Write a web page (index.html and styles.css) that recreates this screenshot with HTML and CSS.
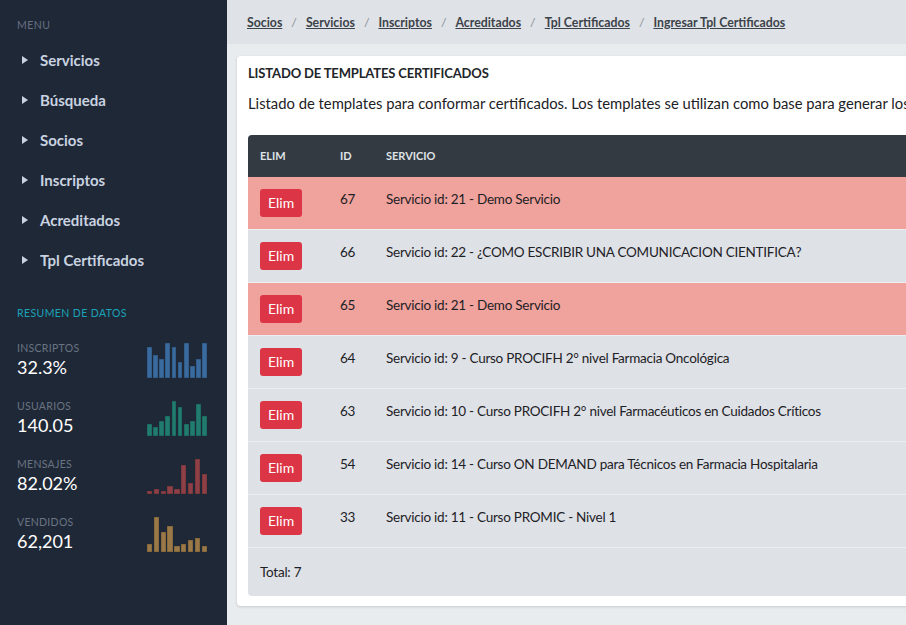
FILE: index.html
```html
<!DOCTYPE html>
<html lang="es">
<head>
<meta charset="utf-8">
<title>Listado de Templates Certificados</title>
<link rel="stylesheet" href="styles.css">
</head>
<body>
<div class="layout">
  <aside class="sidebar">
    <div class="menu-label">MENU</div>
    <ul class="menu">
      <li><span class="caret"></span>Servicios</li>
      <li><span class="caret"></span>Búsqueda</li>
      <li><span class="caret"></span>Socios</li>
      <li><span class="caret"></span>Inscriptos</li>
      <li><span class="caret"></span>Acreditados</li>
      <li><span class="caret"></span>Tpl Certificados</li>
    </ul>
    <div class="summary-label">RESUMEN DE DATOS</div>
    <div class="stats">
      <div class="stat">
        <div class="stat-text">
          <div class="stat-name">INSCRIPTOS</div>
          <div class="stat-value">32.3%</div>
        </div>
        <div class="spark blue">
          <i style="height:31px"></i><i style="height:23px"></i><i style="height:19px"></i><i style="height:35px"></i><i style="height:31px"></i><i style="height:16px"></i><i style="height:35px"></i><i style="height:12px"></i><i style="height:19px"></i><i style="height:35px"></i>
        </div>
      </div>
      <div class="stat">
        <div class="stat-text">
          <div class="stat-name">USUARIOS</div>
          <div class="stat-value">140.05</div>
        </div>
        <div class="spark teal">
          <i style="height:12px"></i><i style="height:9px"></i><i style="height:15px"></i><i style="height:20px"></i><i style="height:35px"></i><i style="height:29px"></i><i style="height:12px"></i><i style="height:15px"></i><i style="height:32px"></i><i style="height:20px"></i>
        </div>
      </div>
      <div class="stat">
        <div class="stat-text">
          <div class="stat-name">MENSAJES</div>
          <div class="stat-value">82.02%</div>
        </div>
        <div class="spark red">
          <i style="height:3px"></i><i style="height:5px"></i><i style="height:3px"></i><i style="height:8px"></i><i style="height:5px"></i><i style="height:29px"></i><i style="height:11px"></i><i style="height:35px"></i><i style="height:20px"></i>
        </div>
      </div>
      <div class="stat">
        <div class="stat-text">
          <div class="stat-name">VENDIDOS</div>
          <div class="stat-value">62,201</div>
        </div>
        <div class="spark gold">
          <i style="height:8px"></i><i style="height:35px"></i><i style="height:20px"></i><i style="height:26px"></i><i style="height:6px"></i><i style="height:8px"></i><i style="height:12px"></i><i style="height:14px"></i><i style="height:6px"></i>
        </div>
      </div>
    </div>
  </aside>
  <main class="main">
    <nav class="breadcrumb">
      <a href="#">Socios</a><span class="sep">/</span>
      <a href="#">Servicios</a><span class="sep">/</span>
      <a href="#">Inscriptos</a><span class="sep">/</span>
      <a href="#">Acreditados</a><span class="sep">/</span>
      <a href="#">Tpl Certificados</a><span class="sep">/</span>
      <a href="#">Ingresar Tpl Certificados</a>
    </nav>
    <section class="card">
      <h1 class="card-title">LISTADO DE TEMPLATES CERTIFICADOS</h1>
      <p class="card-desc">Listado de templates para conformar certificados. Los templates se utilizan como base para generar los certificados de cada servicio.</p>
      <table class="table">
        <thead>
          <tr><th class="c-elim">Elim</th><th class="c-id">ID</th><th>Servicio</th></tr>
        </thead>
        <tbody>
          <tr class="danger"><td><button class="btn">Elim</button></td><td>67</td><td>Servicio id: 21 - Demo Servicio</td></tr>
          <tr><td><button class="btn">Elim</button></td><td>66</td><td>Servicio id: 22 - ¿COMO ESCRIBIR UNA COMUNICACION CIENTIFICA?</td></tr>
          <tr class="danger"><td><button class="btn">Elim</button></td><td>65</td><td>Servicio id: 21 - Demo Servicio</td></tr>
          <tr><td><button class="btn">Elim</button></td><td>64</td><td>Servicio id: 9 - Curso PROCIFH 2° nivel Farmacia Oncológica</td></tr>
          <tr><td><button class="btn">Elim</button></td><td>63</td><td>Servicio id: 10 - Curso PROCIFH 2° nivel Farmacéuticos en Cuidados Críticos</td></tr>
          <tr><td><button class="btn">Elim</button></td><td>54</td><td>Servicio id: 14 - Curso ON DEMAND para Técnicos en Farmacia Hospitalaria</td></tr>
          <tr><td><button class="btn">Elim</button></td><td>33</td><td>Servicio id: 11 - Curso PROMIC - Nivel 1</td></tr>
        </tbody>
        <tfoot>
          <tr><td colspan="3">Total: 7</td></tr>
        </tfoot>
      </table>
    </section>
  </main>
</div>
</body>
</html>
```
FILE: styles.css
```css
* { box-sizing: border-box; }
html, body {
  margin: 0;
  height: 100%;
  overflow: hidden;
}
body {
  font-family: "Lato", "Open Sans", "Liberation Sans", sans-serif;
  font-size: 13.5px;
  color: #1d2125;
  background: #e9ecef;
}
.layout {
  display: flex;
  height: 625px;
}
.sidebar {
  flex: 0 0 227px;
  background: #1f2837;
  padding: 18px 20px 0 17px;
}
.menu-label {
  font-size: 10.5px;
  line-height: 14px;
  color: #657082;
  letter-spacing: 0.5px;
}
.menu {
  list-style: none;
  margin: 8px 0 0;
  padding: 0;
}
.menu li {
  display: flex;
  align-items: center;
  height: 40px;
  font-weight: 700;
  font-size: 15px;
  color: #c9d3e0;
}
.caret {
  width: 0;
  height: 0;
  border-top: 4.5px solid transparent;
  border-bottom: 4.5px solid transparent;
  border-left: 6px solid #c9d3e0;
  margin: 0 12px 0 5px;
}
.summary-label {
  margin-top: 26px;
  font-size: 10.5px;
  line-height: 14px;
  letter-spacing: 0.4px;
  color: #1aa3b8;
}
.stats {
  margin-top: 23px;
  display: flex;
  flex-direction: column;
  gap: 23px;
}
.stat {
  display: flex;
  justify-content: space-between;
  align-items: flex-end;
  height: 35px;
}
.stat-text {
  align-self: flex-start;
  margin-top: -1px;
}
.stat-name {
  font-size: 10.5px;
  line-height: 13px;
  letter-spacing: 0.3px;
  color: #6a7483;
}
.stat-value {
  font-size: 18px;
  line-height: 24px;
  color: #ffffff;
}
.spark {
  display: flex;
  align-items: flex-end;
  gap: 1.5px;
  width: 60px;
  height: 35px;
}
.spark i {
  flex: 1;
  display: block;
  box-shadow: inset 0 0 0 0.5px rgba(0, 0, 0, 0.25);
}
.spark.blue i { background: #3a6b9e; }
.spark.teal i { background: #217c6f; }
.spark.red i { background: #8f4046; }
.spark.gold i { background: #9b7847; }

.main {
  flex: 0 0 auto;
  width: 1000px;
  display: flex;
  flex-direction: column;
}
.breadcrumb {
  height: 44px;
  background: #dfe2e6;
  display: flex;
  align-items: center;
  padding-left: 20px;
  font-size: 12.3px;
  font-weight: 700;
}
.breadcrumb a {
  color: #3d434a;
  text-decoration: underline;
}
.breadcrumb .sep {
  color: #868e96;
  font-weight: 400;
  margin: 0 9px;
}
.card {
  margin: 12px 0 0 10px;
  background: #ffffff;
  border-radius: 4px;
  padding: 9px 10px 10px 11px;
  box-shadow: 0 1px 3px rgba(0, 0, 0, 0.15);
}
.card-title {
  margin: 0;
  font-size: 13px;
  line-height: 17px;
  letter-spacing: -0.15px;
  font-weight: 700;
  color: #212529;
}
.card-desc {
  margin: 10px 0 21px;
  font-size: 14.8px;
  line-height: 22px;
  white-space: nowrap;
  overflow: hidden;
}
.table {
  width: 100%;
  border-collapse: separate;
  border-spacing: 0;
  background: #dee1e5;
  border-radius: 4px;
  overflow: hidden;
}
.table th {
  background: #343a41;
  color: #dfe3e7;
  font-size: 11px;
  line-height: 18px;
  font-weight: 700;
  text-transform: uppercase;
  text-align: left;
  padding: 12px;
}
.table th.c-elim { width: 80px; }
.table th.c-id { width: 46px; }
.table td {
  padding: 12px;
  line-height: 21px;
  letter-spacing: -0.25px;
  vertical-align: top;
  border-top: 1px solid #eceef1;
}
.table thead + tbody tr:first-child td { border-top: 0; }
.table tr.danger td { background: #f0a29c; }
.table tfoot td {
  padding: 14px 12px 13px;
}
.btn {
  display: block;
  font-family: inherit;
  font-size: 14px;
  line-height: 20px;
  padding: 4px 8px;
  color: #ffffff;
  background: #dc3545;
  border: 0;
  border-radius: 3px;
}
```
